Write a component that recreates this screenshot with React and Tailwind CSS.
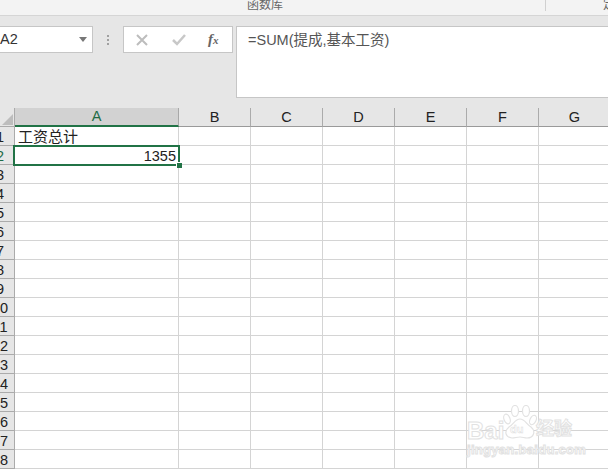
import React from "react";

const font = { fontFamily: '"Liberation Sans", "Noto Sans CJK SC", sans-serif' };
const columns = ["A", "B", "C", "D", "E", "F", "G"];
const rows = Array.from({ length: 18 }, (_, i) => i + 1);

const colWidth = (col) => (col === "A" ? "w-[164px]" : "w-[72px]");

const ColumnHeader = ({ col }) => (
  <div
    className={`${colWidth(col)} shrink-0 h-[19px] flex items-center justify-center text-[14.5px] leading-none border-r ${
      col === "A"
        ? "bg-[#d2d2d2] text-[#1f6b45] border-[#a8a8a8] border-b-2 border-b-[#217346]"
        : "bg-[#e6e6e6] text-[#222] border-[#ababab] border-b border-b-[#9a9a9a]"
    }`}
  >
    {col}
  </div>
);

const Row = ({ n }) => (
  <div className="flex h-[19px]">
    <div className="w-[15px] shrink-0 overflow-hidden bg-[#e6e6e6] border-r border-b border-[#ababab]">
      <div
        className={`w-[28px] ml-[-14px] text-center text-[14.5px] leading-[20px] ${
          n === 2 ? "text-[#1f6b45]" : "text-[#222]"
        }`}
      >
        {n}
      </div>
    </div>
    {columns.map((col) => (
      <div
        key={col}
        className={`${colWidth(col)} shrink-0 relative border-r border-b border-[#d4d4d4] text-[14.5px] leading-[20px] text-[#222]`}
      >
        {col === "A" && n === 1 && <span className="pl-[3px] text-[15px]">工资总计</span>}
        {col === "A" && n === 2 && (
          <div className="absolute left-[-2px] top-[-1px] right-[-2px] bottom-[-2px] border-[2.5px] border-[#217346] text-right pr-[2px] leading-[18px] z-10">
            1355
            <div className="absolute right-[-4px] bottom-[-4px] w-[6px] h-[6px] bg-[#217346] border-l border-t border-white" />
          </div>
        )}
      </div>
    ))}
  </div>
);

const Watermark = () => (
  <div className="absolute left-[466px] top-[404px] w-[120px] h-[56px] text-white font-bold [-webkit-text-stroke:1px_#e2e2e2] pointer-events-none">
    <svg className="absolute left-[36px] top-[1px]" width="36" height="34" viewBox="0 0 36 34" fill="#fff" stroke="#e2e2e2" strokeWidth="1.2">
      <ellipse cx="5" cy="14" rx="3" ry="5" transform="rotate(-20 5 14)" />
      <ellipse cx="13" cy="6" rx="3.5" ry="5.5" />
      <ellipse cx="24" cy="6" rx="3.5" ry="5.5" />
      <ellipse cx="31" cy="15" rx="3" ry="5" transform="rotate(25 31 15)" />
      <path d="M18 14c5 0 6 5 11 8 5 4 3 11-4 11-3 0-4-1-7-1s-5 1-8 1c-7-1-8-7-3-11 5-3 6-8 11-8z" />
    </svg>
    <span className="absolute left-[1px] top-[15px] text-[24px] leading-none">Bai</span>
    <span className="absolute left-[44px] top-[20px] text-[11px] leading-none [-webkit-text-stroke:0.5px_#dcdcdc]">du</span>
    <span className="absolute left-[70px] top-[16px] text-[18px] leading-none">经验</span>
    <span className="absolute left-[1px] top-[39px] text-[13px] tracking-[0.3px] leading-none whitespace-nowrap">jingyan.baidu.com</span>
  </div>
);

export default function App() {
  return (
    <div className="relative w-[608px] h-[470px] overflow-hidden bg-white" style={font}>
      {/* ribbon group labels */}
      <div className="h-[16px] bg-[#f3f3f3] border-b border-[#d5d5d5] flex overflow-hidden">
        <div className="w-[546px] border-r border-[#d0d0d0] h-[11px] pl-[247px] text-[12px] leading-[10px] text-[#666] shrink-0">
          函数库
        </div>
        <div className="pl-[57px] text-[12px] leading-[10px] text-[#666] whitespace-nowrap">定义的名称</div>
      </div>

      {/* formula bar */}
      <div className="h-[92px] bg-[#e6e6e6] pt-[10px] flex items-start">
        <div className="w-[94px] ml-[-1px] h-[27px] shrink-0 bg-white border border-[#c6c6c6] flex items-center justify-between pr-[5px] text-[14.5px] text-[#333]">
          <span>A2</span>
          <svg width="8" height="5" viewBox="0 0 8 5"><path d="M0 0h8L4 5z" fill="#777" /></svg>
        </div>
        <div className="w-[30px] h-[27px] shrink-0 flex flex-col items-center justify-center gap-[2px]">
          {[0, 1, 2].map((i) => (
            <div key={i} className="w-[2px] h-[2px] bg-[#a0a0a0]" />
          ))}
        </div>
        <div className="w-[110px] h-[27px] shrink-0 bg-white border border-[#c6c6c6] flex items-center pl-[12px]">
          <svg width="12" height="12" viewBox="0 0 12 12" stroke="#bdbdbd" strokeWidth="2" fill="none">
            <path d="M1 1l10 10M11 1L1 11" />
          </svg>
          <svg className="ml-[24px]" width="14" height="12" viewBox="0 0 14 12" stroke="#c8c8c8" strokeWidth="2.5" fill="none">
            <path d="M1 6l4 4 8-9" />
          </svg>
          <span className="ml-[22px] text-[15px] italic font-bold text-[#666] leading-none" style={{ fontFamily: '"Liberation Serif", serif' }}>
            f<span className="text-[11px]">x</span>
          </span>
        </div>
        <div className="ml-[3px] flex-1 h-[72px] bg-white border border-r-0 border-[#c6c6c6] pl-[11px] pt-[3px] text-[14.5px] leading-[20px] text-[#555]">
          =SUM(提成,基本工资)
        </div>
      </div>

      {/* sheet */}
      <div className="flex">
        <div className="w-[15px] h-[19px] shrink-0 bg-[#e6e6e6] border-r border-b border-[#ababab] flex items-end justify-end p-[1px]">
          <svg width="11" height="11" viewBox="0 0 11 11"><path d="M11 0v11H0z" fill="#bdbdbd" /></svg>
        </div>
        {columns.map((col) => (
          <ColumnHeader key={col} col={col} />
        ))}
      </div>
      {rows.map((n) => (
        <Row key={n} n={n} />
      ))}

      <Watermark />
    </div>
  );
}
